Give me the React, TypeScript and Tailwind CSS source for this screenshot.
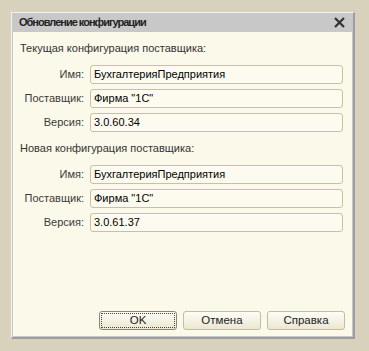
import React from 'react';

type Row = { label: string; value: string };

function Field({ label, value }: Row) {
  return (
    <div className="flex items-center h-[19px]">
      <div className="w-[65px] text-right text-[11px] text-[#3a3a3a] pr-[1px]">{label}</div>
      <div className="ml-[5px] flex-1 h-[19px] border border-[#c9c09d] rounded-[3px] bg-[#fdfbef] flex items-center pl-[3px] text-[11px] text-black">
        {value}
      </div>
    </div>
  );
}

function Section({ title, rows }: { title: string; rows: Row[] }) {
  return (
    <div className="flex flex-col">
      <div className="h-[16px] leading-[16px] text-[11px] text-[#333]">{title}</div>
      <div className="mt-[9px] flex flex-col gap-[5px] pr-[9px]">
        {rows.map((r) => (
          <Field key={r.label} {...r} />
        ))}
      </div>
    </div>
  );
}

function Button({ children, focused }: { children: React.ReactNode; focused?: boolean }) {
  return (
    <button
      className={
        'w-[78px] h-[19px] rounded-[3px] border bg-gradient-to-b from-[#fefdf6] to-[#ebe7d2] text-[11.5px] text-[#222] flex items-center justify-center ' +
        (focused ? 'border-[#8d8772] p-[1px]' : 'border-[#c6bd99]')
      }
    >
      {focused ? (
        <span className="w-full h-full flex items-center justify-center border border-dotted border-[#444] rounded-[1px]">
          {children}
        </span>
      ) : (
        children
      )}
    </button>
  );
}

export default function App() {
  const current: Row[] = [
    { label: 'Имя:', value: 'БухгалтерияПредприятия' },
    { label: 'Поставщик:', value: 'Фирма "1С"' },
    { label: 'Версия:', value: '3.0.60.34' },
  ];
  const next: Row[] = [
    { label: 'Имя:', value: 'БухгалтерияПредприятия' },
    { label: 'Поставщик:', value: 'Фирма "1С"' },
    { label: 'Версия:', value: '3.0.61.37' },
  ];

  return (
    <div
      className="w-[369px] h-[351px] bg-[#d8d2bd] pt-[12px] pl-[11px]"
      style={{ fontFamily: '"Liberation Sans", Arial, sans-serif' }}
    >
      <div className="w-[344px] h-[327px] flex flex-col bg-[#c8c8c8] border-t border-l border-[#f2f2f2] border-r-2 border-b-2 border-r-[#9d9da4] border-b-[#9d9da4] pl-[1px] pr-[1px] pb-[1px]">
        <div className="h-[19px] flex items-center justify-between pl-[6px] pr-[6px]">
          <span className="text-[11px] font-bold tracking-[-1px] text-[#222]">Обновление конфигурации</span>
          <svg width="11" height="11" viewBox="0 0 11 11" className="mr-[1px]">
            <path d="M1 1L10 10M10 1L1 10" stroke="#333" strokeWidth="2.2" />
          </svg>
        </div>
        <div className="flex-1 bg-[#fbf9ea] pl-[7px] pt-[8px] flex flex-col">
          <Section title="Текущая конфигурация поставщика:" rows={current} />
          <div className="mt-[8px]">
            <Section title="Новая конфигурация поставщика:" rows={next} />
          </div>
          <div className="mt-auto flex justify-end gap-[6px] pr-[7px] pb-[6px]">
            <Button focused>OK</Button>
            <Button>Отмена</Button>
            <Button>Справка</Button>
          </div>
        </div>
      </div>
    </div>
  );
}
